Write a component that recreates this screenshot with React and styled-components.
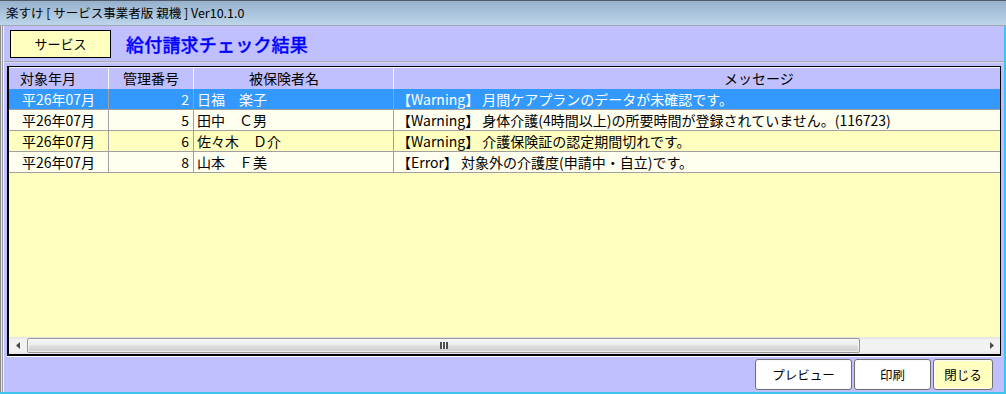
import React from 'react';
import styled, { createGlobalStyle } from 'styled-components';

const rows = [
  { month: '平26年07月', no: 2, name: '日福　楽子', msg: '【Warning】 月間ケアプランのデータが未確認です。', selected: true },
  { month: '平26年07月', no: 5, name: '田中　Ｃ男', msg: '【Warning】 身体介護(4時間以上)の所要時間が登録されていません。(116723)' },
  { month: '平26年07月', no: 6, name: '佐々木　Ｄ介', msg: '【Warning】 介護保険証の認定期間切れです。' },
  { month: '平26年07月', no: 8, name: '山本　Ｆ美', msg: '【Error】 対象外の介護度(申請中・自立)です。' },
];

const columns = [
  { label: '対象年月', pad: 11 },
  { label: '管理番号', pad: 14 },
  { label: '被保険者名', pad: 55 },
  { label: 'メッセージ', pad: 330 },
];

export default function App() {
  return (
    <>
      <GlobalStyle />
      <Window>
        <TitleBar>楽すけ [ サービス事業者版 親機 ] Ver10.1.0</TitleBar>
        <Client>
          <Header>
            <ServiceButton>サービス</ServiceButton>
            <Title>給付請求チェック結果</Title>
          </Header>
          <Separator />
          <GridFrame>
            <HeaderRow>
              {columns.map((c) => (
                <HeaderCell key={c.label} pad={c.pad}>{c.label}</HeaderCell>
              ))}
            </HeaderRow>
            <Rows>
              {rows.map((r, i) => (
                <Row key={r.no} selected={r.selected} striped={i % 2 === 1}>
                  <Cell align="center">{r.month}</Cell>
                  <Cell align="right">{r.no}</Cell>
                  <Cell>{r.name}</Cell>
                  <Cell last>{r.msg}</Cell>
                </Row>
              ))}
            </Rows>
            <ScrollBar>
              <ArrowButton>
                <svg width="4" height="7" viewBox="0 0 4 7"><path d="M4 0 L0 3.5 L4 7 Z" fill="#4a4a4a" /></svg>
              </ArrowButton>
              <Track>
                <Thumb style={{ width: 833 }}>
                  <Grip />
                </Thumb>
              </Track>
              <ArrowButton>
                <svg width="4" height="7" viewBox="0 0 4 7"><path d="M0 0 L4 3.5 L0 7 Z" fill="#4a4a4a" /></svg>
              </ArrowButton>
            </ScrollBar>
          </GridFrame>
          <Footer>
            <Button w={97}>プレビュー</Button>
            <Button w={77}>印刷</Button>
            <Button w={60} tone="yellow">閉じる</Button>
          </Footer>
        </Client>
      </Window>
    </>
  );
}

const GlobalStyle = createGlobalStyle`
  body {
    margin: 0;
    background: #fff;
    font-family: "Noto Sans CJK JP", "Noto Sans", sans-serif;
  }
`;

const Window = styled.div`
  width: 1006px;
  height: 394px;
  display: flex;
  flex-direction: column;
  box-sizing: border-box;
  overflow: hidden;
`;

const TitleBar = styled.div`
  height: 24px;
  border-top: 1px solid #4f5a66;
  border-bottom: 1px solid #a3a8b0;
  background: linear-gradient(#97b1cd, #bcd5ea);
  padding-left: 6px;
  font-size: 12.5px;
  line-height: 24px;
  color: #000;
  white-space: nowrap;
`;

const Client = styled.div`
  flex: 1;
  display: flex;
  flex-direction: column;
  min-height: 0;
  padding-left: 4px;
  border-right: 2px solid #3ec3ec;
  border-bottom: 2px solid #3ec3ec;
  background: linear-gradient(to right, #8a8a8a 0 1px, #e6e6f0 1px 2px, #9a9aa6 2px 3px, #f4f4ff 3px 4px, #c0c0ff 4px);
`;

const Header = styled.div`
  height: 35px;
  display: flex;
  align-items: center;
  gap: 15px;
  padding-left: 6px;
  box-sizing: border-box;
`;

const ServiceButton = styled.div`
  width: 101px;
  height: 28px;
  box-sizing: border-box;
  border: 1px solid #000;
  background: #ffffc0;
  display: flex;
  align-items: center;
  justify-content: center;
  font-size: 13px;
  color: #000;
`;

const Title = styled.h1`
  margin: 0;
  font-size: 18px;
  font-weight: 500;
  color: #0000ff;
  letter-spacing: 0.2px;
  -webkit-text-stroke: 0.3px #0000ff;
`;

const Separator = styled.div`
  height: 1px;
  background: #a8a8b4;
  border-bottom: 1px solid #d8d8e8;
`;

const GridFrame = styled.div`
  flex: 1;
  min-height: 0;
  margin: 3px 3px 1px 3px;
  display: flex;
  flex-direction: column;
  border-top: 1px solid #000;
  border-left: 2px solid #000;
  border-right: 1px solid #000;
  border-bottom: 2px solid #000;
  box-shadow: 0 1px 0 #ffffff;
  background: #ffffc0;
`;

const grid = `
  display: grid;
  grid-template-columns: 100px 85px 200px 1fr;
`;

const HeaderRow = styled.div`
  ${grid}
  height: 22px;
  box-sizing: border-box;
  border-top: 1px solid #f4f4ff;
  background: #c0c0ff;
`;

const HeaderCell = styled.div`
  padding-left: ${(p) => p.pad}px;
  border-right: 1px solid #f4f4ff;
  font-size: 14px;
  line-height: 21px;
  color: #000;
  white-space: nowrap;
  &:last-child {
    border-right: none;
  }
`;

const Rows = styled.div`
  flex: 1;
  min-height: 0;
  background: #ffffc0;
`;

const Row = styled.div`
  ${grid}
  height: 21px;
  box-sizing: border-box;
  border-bottom: 1px solid #a0a0a0;
  background: ${(p) => (p.selected ? '#3399ff' : p.striped ? '#fffff0' : '#ffffc0')};
  color: ${(p) => (p.selected ? '#fff' : '#000')};
`;

const Cell = styled.div`
  padding: 0 ${(p) => (p.align === 'right' ? 4 : 3)}px;
  border-right: ${(p) => (p.last ? 'none' : '1px solid #a0a0a0')};
  text-align: ${(p) => p.align || 'left'};
  font-size: 14px;
  line-height: 20px;
  white-space: nowrap;
  overflow: hidden;
`;

const ScrollBar = styled.div`
  height: 17px;
  display: flex;
  background: linear-gradient(#e3e3e3, #f2f2f2 20%, #f2f2f2 80%, #e6e6e6);
`;

const ArrowButton = styled.div`
  width: 17px;
  display: flex;
  align-items: center;
  justify-content: center;
`;

const Track = styled.div`
  flex: 1;
  padding: 1px 1px;
  display: flex;
`;

const Thumb = styled.div`
  box-sizing: border-box;
  border: 1px solid #979797;
  border-radius: 2px;
  background: linear-gradient(#f5f5f5, #ececec 45%, #dcdcdc 55%, #cfcfcf);
  box-shadow: inset 0 0 0 1px rgba(255, 255, 255, 0.6);
  display: flex;
  align-items: center;
  justify-content: center;
`;

const Grip = styled.div`
  width: 8px;
  height: 7px;
  background: repeating-linear-gradient(to right, #4e4e4e 0 2px, #ffffff 2px 3px);
`;

const Footer = styled.div`
  height: 35px;
  display: flex;
  justify-content: flex-end;
  align-items: flex-start;
  gap: 2px;
  padding: 2px 11px 0 0;
  box-sizing: border-box;
`;

const Button = styled.button`
  width: ${(p) => p.w}px;
  height: 31px;
  box-sizing: border-box;
  border: 1px solid #707070;
  border-radius: 3px;
  box-shadow: inset 0 0 0 1px #fbfbfb;
  background: ${(p) => (p.tone === 'yellow' ? '#ffffc0' : '#ffffff')};
  font-family: "Noto Sans CJK JP", "Noto Sans", sans-serif;
  font-size: 12.5px;
  color: #000;
  padding: 0;
  cursor: pointer;
`;
